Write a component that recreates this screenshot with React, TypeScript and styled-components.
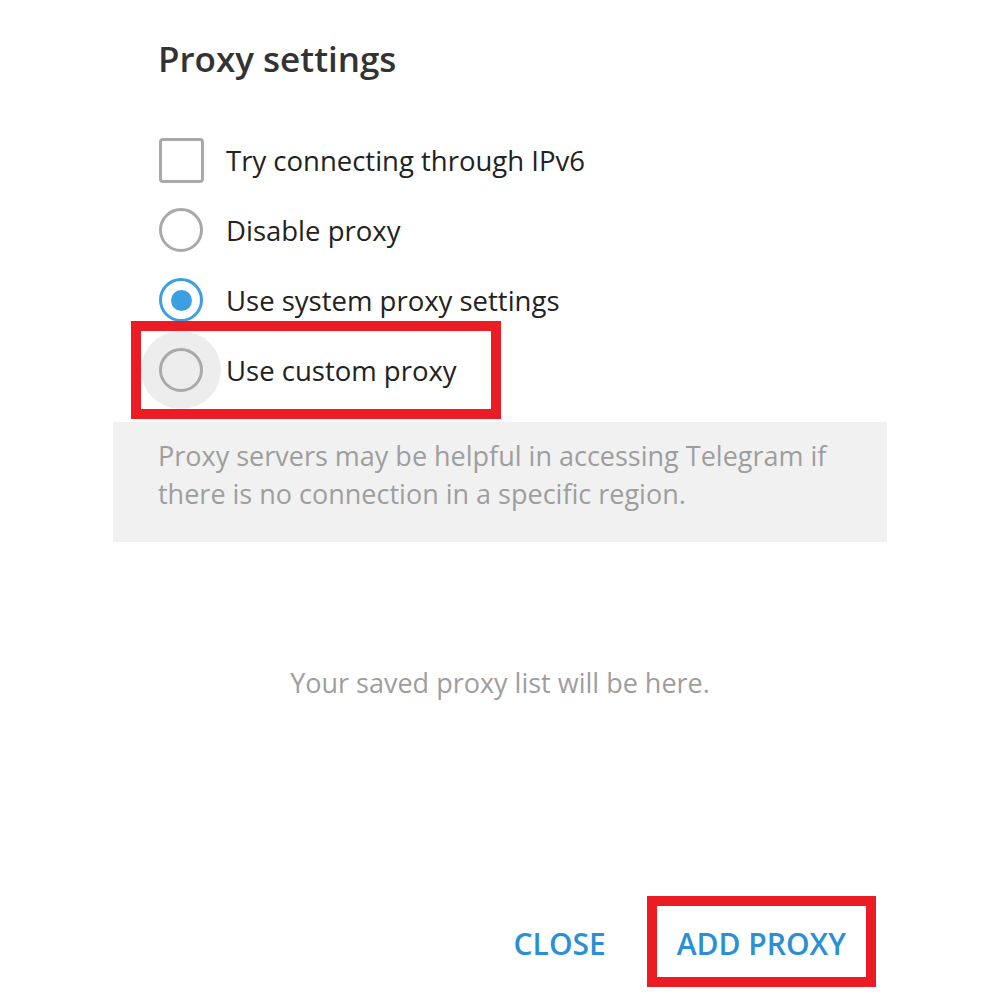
import React from 'react';
import styled, { createGlobalStyle } from 'styled-components';

const GlobalStyle = createGlobalStyle`
  html, body {
    margin: 0;
    padding: 0;
    background: #ffffff;
  }
  body {
    font-family: "Open Sans", "Noto Sans", sans-serif;
  }
`;

type Option = {
  id: string;
  label: string;
  kind: 'checkbox' | 'radio';
  checked?: boolean;
  highlighted?: boolean;
};

const options: Option[] = [
  { id: 'ipv6', label: 'Try connecting through IPv6', kind: 'checkbox' },
  { id: 'disable', label: 'Disable proxy', kind: 'radio' },
  { id: 'system', label: 'Use system proxy settings', kind: 'radio', checked: true },
  { id: 'custom', label: 'Use custom proxy', kind: 'radio', highlighted: true },
];

const App: React.FC = () => {
  return (
    <>
      <GlobalStyle />
      <Dialog>
        <Title>Proxy settings</Title>

        <OptionList>
          {options.map((option) => {
            const control = option.kind === 'checkbox'
              ? <Checkbox />
              : <Radio $checked={!!option.checked} />;

            if (option.highlighted) {
              return (
                <Row key={option.id}>
                  <Highlight>
                    <ControlSlot $ripple>{control}</ControlSlot>
                    <Label>{option.label}</Label>
                  </Highlight>
                </Row>
              );
            }

            return (
              <Row key={option.id}>
                <ControlSlot>{control}</ControlSlot>
                <Label>{option.label}</Label>
              </Row>
            );
          })}
        </OptionList>

        <InfoBand>
          Proxy servers may be helpful in accessing Telegram if
          <br />
          there is no connection in a specific region.
        </InfoBand>

        <EmptyState>Your saved proxy list will be here.</EmptyState>

        <Footer>
          <FlatButton>CLOSE</FlatButton>
          <FlatButton $marked>ADD PROXY</FlatButton>
        </Footer>
      </Dialog>
    </>
  );
};

const Dialog = styled.div`
  width: 774px;
  height: 1000px;
  margin-left: 113px;
  background: #ffffff;
  display: flex;
  flex-direction: column;
  box-sizing: border-box;
`;

const Title = styled.div`
  padding: 36px 0 0 45px;
  font-size: 35px;
  line-height: 46px;
  font-weight: 600;
  color: #333333;
`;

const OptionList = styled.div`
  display: flex;
  flex-direction: column;
  margin-top: 43px;
  padding-left: 28px;
`;

const Row = styled.div`
  display: flex;
  align-items: center;
  height: 70px;
`;

const Highlight = styled.div`
  display: flex;
  align-items: center;
  height: 78px;
  padding-right: 34px;
  outline: 10px solid #ec1c24;
`;

const ControlSlot = styled.div<{ $ripple?: boolean }>`
  width: 80px;
  height: 78px;
  display: flex;
  align-items: center;
  justify-content: center;
  border-radius: 50%;
  background: ${(p) => (p.$ripple ? '#ededed' : 'transparent')};
`;

const Checkbox = styled.div`
  width: 45px;
  height: 45px;
  box-sizing: border-box;
  border: 3px solid #a9a9a9;
  border-radius: 4px;
`;

const Radio = styled.div<{ $checked: boolean }>`
  width: 44px;
  height: 44px;
  box-sizing: border-box;
  border-radius: 50%;
  border: 3px solid ${(p) => (p.$checked ? '#3d9fe3' : '#a9a9a9')};
  display: flex;
  align-items: center;
  justify-content: center;

  &::after {
    content: '';
    display: ${(p) => (p.$checked ? 'block' : 'none')};
    width: 21px;
    height: 21px;
    border-radius: 50%;
    background: #3d9fe3;
  }
`;

const Label = styled.div`
  margin-left: 5px;
  font-size: 27.5px;
  color: #222222;
  white-space: nowrap;
`;

const InfoBand = styled.div`
  margin-top: 17px;
  height: 120px;
  box-sizing: border-box;
  padding: 15px 45px 0;
  background: #f1f1f1;
  color: #9e9e9e;
  font-size: 27px;
  line-height: 38px;
  white-space: nowrap;
`;

const EmptyState = styled.div`
  padding-top: 123px;
  text-align: center;
  font-size: 27px;
  line-height: 36px;
  color: #9e9e9e;
`;

const Footer = styled.div`
  margin-top: auto;
  display: flex;
  justify-content: flex-end;
  align-items: center;
  gap: 31px;
  padding: 0 21px 23px 0;
`;

const FlatButton = styled.button<{ $marked?: boolean }>`
  height: 71px;
  padding: 4px 20px 0;
  border: none;
  background: #ffffff;
  font-family: "Open Sans", "Noto Sans", sans-serif;
  font-size: 30px;
  font-weight: 600;
  color: #2b8fd6;
  outline: ${(p) => (p.$marked ? '10px solid #ec1c24' : 'none')};
  cursor: pointer;
`;

export default App;
